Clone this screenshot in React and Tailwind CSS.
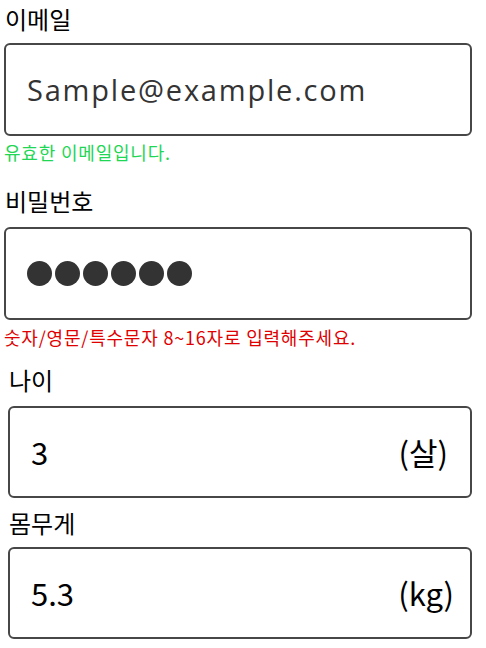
const kr = { fontFamily: '"Noto Sans CJK KR", "Noto Sans", sans-serif' };
const latin = { fontFamily: '"Open Sans", "Noto Sans CJK KR", sans-serif' };

function Label({ children, className = "" }) {
  return (
    <div className={`text-[24px] leading-[30px] text-black ${className}`} style={kr}>
      {children}
    </div>
  );
}

function Box({ children, className = "" }) {
  return (
    <div
      className={`flex items-center rounded-[6px] border-2 border-[#474747] bg-white ${className}`}
    >
      {children}
    </div>
  );
}

export default function App() {
  return (
    <div className="w-[472px] bg-white pl-1 pt-[4px]">
      <Label className="pl-[1px]">이메일</Label>
      <Box className="mt-[9px] h-[93px] pl-[21px]">
        <span className="text-[29px] tracking-[1.8px] text-[#333333]" style={latin}>
          Sample@example.com
        </span>
      </Box>
      <div className="mt-[5px] text-[18px] leading-[22px] tracking-[0.8px] text-[#1fd655]" style={kr}>
        유효한 이메일입니다.
      </div>

      <Label className="mt-[23px] pl-[1px]">비밀번호</Label>
      <Box className="mt-[11px] h-[93px] pl-[21px]">
        <div className="flex gap-[3px]">
          {[0, 1, 2, 3, 4, 5].map((i) => (
            <span key={i} className="h-[25px] w-[25px] rounded-full bg-[#333333]" />
          ))}
        </div>
      </Box>
      <div className="mt-[6px] text-[18px] leading-[22px] tracking-[0.8px] text-[#e00000]" style={kr}>
        숫자/영문/특수문자 8~16자로 입력해주세요.
      </div>

      <div className="pl-1">
        <Label className="mt-[17px] pl-[1px]">나이</Label>
        <Box className="mt-[11px] h-[92px] justify-between pl-[21px] pr-[22px]">
          <span className="text-[31px] text-black" style={kr}>3</span>
          <span className="text-[31px] text-black" style={kr}>(살)</span>
        </Box>

        <Label className="mt-[10px] pl-[1px]">몸무게</Label>
        <Box className="mt-[9px] h-[92px] justify-between pl-[21px] pr-[16px]">
          <span className="text-[31px] text-black" style={kr}>5.3</span>
          <span className="text-[31px] text-black" style={kr}>(kg)</span>
        </Box>
      </div>
    </div>
  );
}
